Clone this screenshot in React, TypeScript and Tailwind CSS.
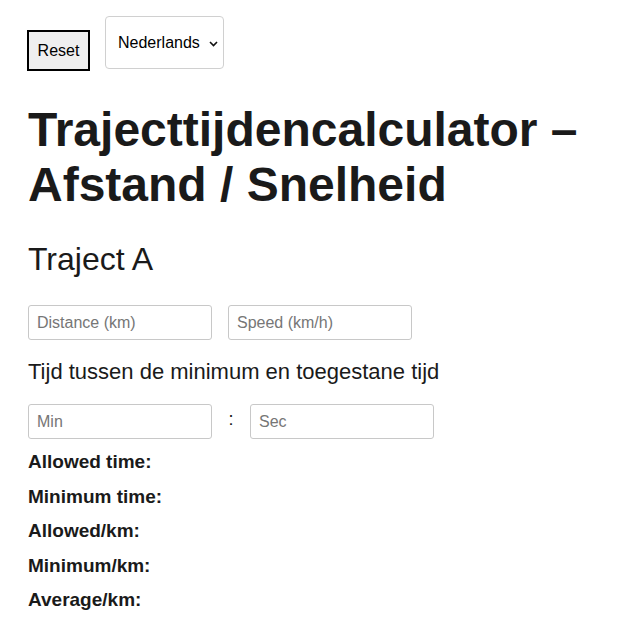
export default function App() {
  const labels = ["Allowed time:", "Minimum time:", "Allowed/km:", "Minimum/km:", "Average/km:"];

  return (
    <div className="min-h-[627px] bg-white px-[28px] text-[#1a1a1a]" style={{ fontFamily: '"Liberation Sans", Arial, sans-serif' }}>
      <div className="-ml-[1px] flex items-start gap-[15px] pt-[16px]">
        <button className="mt-[14px] h-[41px] w-[63px] border-2 border-black bg-[#efefef] text-[16px] text-black">
          Reset
        </button>
        <div className="relative h-[53px] w-[119px] rounded-[4px] border border-[#d0d0d0] bg-white">
          <select className="h-full w-full appearance-none bg-transparent pl-[12px] text-[16px] text-black outline-none">
            <option>Nederlands</option>
            <option>English</option>
          </select>
          <svg className="pointer-events-none absolute right-[5px] top-[24px]" width="9" height="6" viewBox="0 0 9 6">
            <path d="M1 1l3.5 3.5L8 1" fill="none" stroke="#111" strokeWidth="1.6" />
          </svg>
        </div>
      </div>

      <h1 className="mt-[31px] text-[48px] font-bold leading-[55px]">
        Trajecttijdencalculator – Afstand / Snelheid
      </h1>

      <h2 className="mt-[27px] text-[32px] leading-[40px]">Traject A</h2>

      <div className="mt-[26px] flex gap-[16px]">
        <input className="h-[35px] w-[184px] rounded-[3px] border border-[#c8c8c8] px-[8px] text-[16px] placeholder:text-[#767676]" placeholder="Distance (km)" />
        <input className="h-[35px] w-[184px] rounded-[3px] border border-[#c8c8c8] px-[8px] text-[16px] placeholder:text-[#767676]" placeholder="Speed (km/h)" />
      </div>

      <p className="mt-[18px] text-[22px] leading-[28px]">Tijd tussen de minimum en toegestane tijd</p>

      <div className="mt-[18px] flex items-center">
        <input className="h-[35px] w-[184px] rounded-[3px] border border-[#c8c8c8] px-[8px] text-[16px] placeholder:text-[#767676]" placeholder="Min" />
        <span className="w-[38px] pb-[4px] text-center text-[18px]">:</span>
        <input className="h-[35px] w-[184px] rounded-[3px] border border-[#c8c8c8] px-[8px] text-[16px] placeholder:text-[#767676]" placeholder="Sec" />
      </div>

      <div className="mt-[6px] flex flex-col">
        {labels.map((l) => (
          <div key={l} className="h-[34.6px] text-[19px] font-bold leading-[34px]">
            {l}
          </div>
        ))}
      </div>
    </div>
  );
}
